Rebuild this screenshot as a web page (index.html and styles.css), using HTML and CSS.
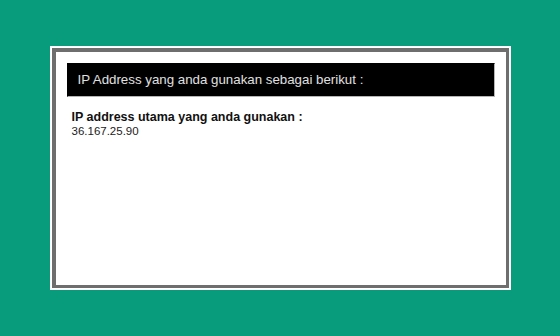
FILE: index.html
```html
<!DOCTYPE html>
<html>
<head>
    <title>IP Address</title>
    <link rel="stylesheet" href="styles.css">
</head>
<body>
    <div class="frame">
        <div class="panel">
            <div class="panel-title">IP Address yang anda gunakan sebagai berikut :</div>
            <div class="ip-info">
                <b class="ip-label">IP address utama yang anda gunakan :</b>
                <div class="ip-value">36.167.25.90</div>
            </div>
        </div>
    </div>
</body>
</html>
```

FILE: styles.css
```css
body {
    font-family: Arial, "Liberation Sans", sans-serif;
    background-color: #089c7c;
    margin: 0;
    height: 100vh;
    display: flex;
    align-items: center;
    justify-content: center;
}

.frame {
    width: 461px;
    height: 244px;
    box-sizing: border-box;
    padding: 2px;
    background-color: #fff;
}

.panel {
    height: 100%;
    box-sizing: border-box;
    border: 4px solid #6e6e6e;
    border-right-width: 3px;
    border-bottom-width: 3px;
    background-color: #fff;
    padding: 11px;
}

.panel-title {
    background-color: #000;
    color: #e0e0e0;
    border: 1px solid #b5b5b5;
    border-top-color: #000;
    border-left-color: #000;
    font-size: 13.3px;
    line-height: 32px;
    padding: 0 10px;
}

.ip-info {
    margin: 14px 0 0 5px;
    font-size: 12.5px;
    line-height: 13px;
    color: #111;
}

.ip-label {
    display: block;
}

.ip-value {
    font-size: 11.5px;
    line-height: 14px;
    color: #222;
}
```
